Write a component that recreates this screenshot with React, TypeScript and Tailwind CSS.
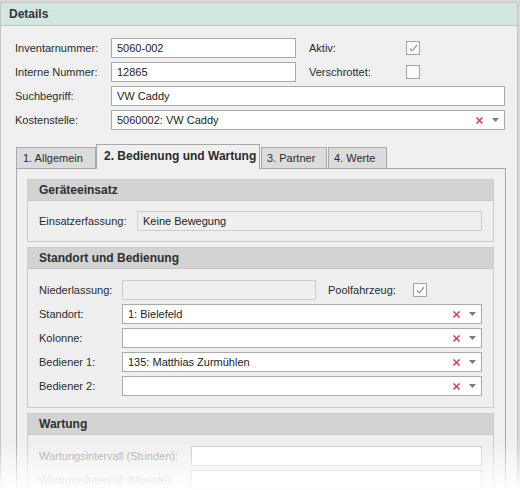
import type { ReactNode } from 'react';

const font = { fontFamily: '"Liberation Sans", Arial, sans-serif' };

function ClearIcon() {
  return (
    <svg width="7" height="7" viewBox="0 0 7 7" className="shrink-0">
      <path d="M1 1 L6 6 M6 1 L1 6" stroke="#d23a4c" strokeWidth="1.5" strokeLinecap="square" />
    </svg>
  );
}

function ArrowIcon() {
  return (
    <svg width="7" height="4" viewBox="0 0 7 4" className="shrink-0">
      <path d="M0 0 H7 L3.5 4 Z" fill="#7a7a7a" />
    </svg>
  );
}

function Check({ checked }: { checked?: boolean }) {
  return (
    <div className="w-[14px] h-[14px] border border-[#a3a3a3] bg-[#fbfbfb] flex items-center justify-center">
      {checked && (
        <svg width="9" height="8" viewBox="0 0 9 8">
          <path d="M1 4.5 L3.4 6.8 L8 1.2" stroke="#8a8a8a" strokeWidth="1.1" fill="none" />
        </svg>
      )}
    </div>
  );
}

function Input({ value, w, combo, disabled, faint }: { value?: string; w: string; combo?: boolean; disabled?: boolean; faint?: boolean }) {
  const tone = disabled
    ? 'bg-[#efefef] border-[#cdcdcd]'
    : faint
      ? 'bg-white border-[#c9c9c9]'
      : 'bg-white border-[#a9a9a9]';
  return (
    <div className={`${w} h-[20px] border ${tone} flex items-center pl-[5px] pr-[5px] text-[11px] text-[#222]`}>
      <span className="flex-1 truncate">{value}</span>
      {combo && (
        <div className="flex items-center gap-[9px]">
          <ClearIcon />
          <ArrowIcon />
        </div>
      )}
    </div>
  );
}

function Row({ label, labelW, children, muted }: { label: string; labelW: string; children: ReactNode; muted?: boolean }) {
  return (
    <div className="flex items-center h-[20px]">
      <div className={`${labelW} shrink-0 text-[11px] ${muted ? 'text-[#9c9c9c]' : 'text-[#2b2b2b]'}`}>{label}</div>
      {children}
    </div>
  );
}

function Section({ title, children, last }: { title: string; children: ReactNode; last?: boolean }) {
  return (
    <div className={`border border-[#cbcbcb] bg-[#efefef] ${last ? 'border-b-0' : ''}`}>
      <div className="h-[21px] bg-[#d3d3d3] border-b border-[#c6c6c6] pl-[11px] flex items-center text-[12px] font-bold text-[#2f2f2f]">
        {title}
      </div>
      {children}
    </div>
  );
}

export default function App() {
  return (
    <div style={font} className="relative w-[520px] h-[490px] overflow-hidden bg-[#d9d9d9] pt-[2px]">
      <div className="w-[518px] h-[520px] border border-[#c2c2c2] bg-[#f0f0f0]">
        {/* Header */}
        <div className="h-[23px] bg-[#d2e7e0] border-b border-[#bfc7c4] pl-[8px] flex items-center text-[12px] font-bold text-[#333]">
          Details
        </div>

        <div className="pl-[14px] pr-[12px] pt-[12px]">
          <div className="flex flex-col gap-[4px]">
            <div className="flex items-center">
              <Row label="Inventarnummer:" labelW="w-[96px]">
                <Input value="5060-002" w="w-[185px]" />
              </Row>
              <div className="ml-[13px] w-[97px] text-[11px] text-[#2b2b2b]">Aktiv:</div>
              <Check checked />
            </div>
            <div className="flex items-center">
              <Row label="Interne Nummer:" labelW="w-[96px]">
                <Input value="12865" w="w-[185px]" />
              </Row>
              <div className="ml-[13px] w-[97px] text-[11px] text-[#2b2b2b]">Verschrottet:</div>
              <Check />
            </div>
            <Row label="Suchbegriff:" labelW="w-[96px]">
              <Input value="VW Caddy" w="w-[394px]" />
            </Row>
            <Row label="Kostenstelle:" labelW="w-[96px]">
              <Input value="5060002: VW Caddy" w="w-[394px]" combo />
            </Row>
          </div>

          {/* Tabs */}
          <div className="mt-[14px] ml-[1px] flex items-end h-[24px] text-[11px] text-[#2b2b2b]">
            <div className="h-[21px] w-[80px] border border-[#a9a9a9] border-b-0 bg-[#dcdcdc] flex items-center pl-[6px]">1. Allgemein</div>
            <div className="relative z-10 h-[25px] -mb-[1px] w-[164px] border border-[#a9a9a9] border-b-0 bg-[#f0f0f0] flex items-center pl-[7px] pb-[2px] font-bold text-[12px]">
              2. Bedienung und Wartung
            </div>
            <div className="h-[21px] w-[66px] ml-[1px] border border-[#a9a9a9] border-b-0 bg-[#dcdcdc] flex items-center pl-[5px]">3. Partner</div>
            <div className="h-[21px] w-[59px] ml-[1px] border border-[#a9a9a9] border-b-0 bg-[#dcdcdc] flex items-center pl-[5px]">4. Werte</div>
          </div>

          {/* Tab panel */}
          <div className="ml-[1px] w-[490px] h-[400px] border border-[#a9a9a9] bg-[#f0f0f0] pl-[10px] pt-[10px] flex flex-col gap-[5px]">
            <div className="w-[467px]">
              <Section title="Geräteeinsatz">
                <div className="pl-[11px] pt-[10px] pb-[10px]">
                  <Row label="Einsatzerfassung:" labelW="w-[98px]">
                    <Input value="Keine Bewegung" w="w-[345px]" disabled />
                  </Row>
                </div>
              </Section>
            </div>
            <div className="w-[467px]">
              <Section title="Standort und Bedienung">
                <div className="pl-[11px] pt-[11px] pb-[11px] flex flex-col gap-[4px]">
                  <div className="flex items-center">
                    <Row label="Niederlassung:" labelW="w-[83px]">
                      <Input w="w-[194px]" disabled />
                    </Row>
                    <div className="ml-[12px] w-[85px] text-[11px] text-[#2b2b2b]">Poolfahrzeug:</div>
                    <Check checked />
                  </div>
                  <Row label="Standort:" labelW="w-[83px]">
                    <Input value="1: Bielefeld" w="w-[360px]" combo />
                  </Row>
                  <Row label="Kolonne:" labelW="w-[83px]">
                    <Input w="w-[360px]" combo />
                  </Row>
                  <Row label="Bediener 1:" labelW="w-[83px]">
                    <Input value="135: Matthias Zurmühlen" w="w-[360px]" combo />
                  </Row>
                  <Row label="Bediener 2:" labelW="w-[83px]">
                    <Input w="w-[360px]" combo />
                  </Row>
                </div>
              </Section>
            </div>
            <div className="w-[467px]">
              <Section title="Wartung" last>
                <div className="pl-[11px] pt-[11px] flex flex-col gap-[4px]">
                  <Row label="Wartungsintervall (Stunden):" labelW="w-[152px]" muted>
                    <Input w="w-[291px]" faint />
                  </Row>
                  <Row label="Wartungsintervall (Monate):" labelW="w-[152px]" muted>
                    <Input w="w-[291px]" faint />
                  </Row>
                </div>
              </Section>
            </div>
          </div>
        </div>
      </div>

      {/* fade-out at the bottom */}
      <div className="pointer-events-none absolute left-0 right-0 bottom-0 h-[48px] bg-gradient-to-b from-white/0 to-white" />
    </div>
  );
}
